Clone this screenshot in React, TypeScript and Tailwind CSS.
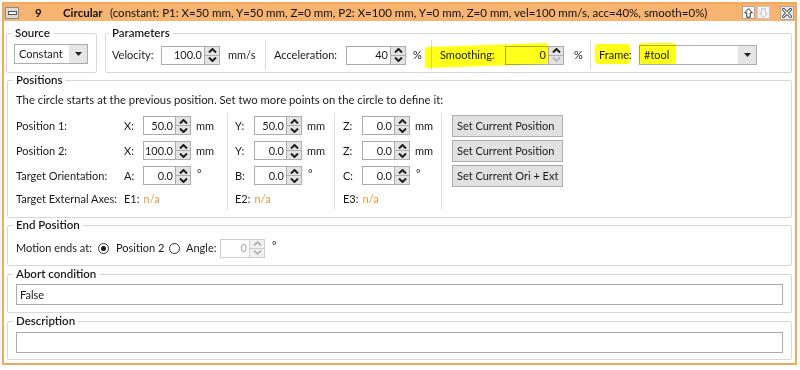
import React from "react";

function Chev({ up, dim }: { up: boolean; dim?: boolean }) {
  return (
    <svg width="9" height="5" viewBox="0 0 9 5" className="block">
      <path
        d={up ? "M1 4.5 L4.5 1 L8 4.5" : "M1 0.5 L4.5 4 L8 0.5"}
        fill="none"
        stroke={dim ? "#b8b8b8" : "#1e1e1e"}
        strokeWidth="2"
      />
    </svg>
  );
}

function Num({
  value,
  w,
  dimUp,
  dimDown,
  dis,
}: {
  value: string;
  w: string;
  dimUp?: boolean;
  dimDown?: boolean;
  dis?: boolean;
}) {
  return (
    <div className="flex h-[19px]">
      <div
        className={`${w} h-full border bg-white flex items-center justify-end pr-[2px] ${
          dis ? "border-[#cccccc] text-[#a6a6a6]" : "border-[#ababab] text-[#1a1a1a]"
        }`}
      >
        {value}
      </div>
      <div
        className={`w-[15px] h-full flex flex-col border border-l-0 ${
          dis ? "border-[#cccccc] bg-[#f0f0f0]" : "border-[#adadad] bg-[#e3e3e3]"
        }`}
      >
        <div
          className={`flex-1 flex items-center justify-center border-b ${
            dis ? "border-[#cccccc]" : "border-[#adadad]"
          }`}
        >
          <Chev up dim={dimUp || dis} />
        </div>
        <div className="flex-1 flex items-center justify-center">
          <Chev up={false} dim={dimDown || dis} />
        </div>
      </div>
    </div>
  );
}

function Combo({ value, w }: { value: string; w: string }) {
  return (
    <div className={`${w} h-[20px] flex border border-[#acacac] bg-white`}>
      <div className="flex-1 flex items-center pl-[4px] text-[#1a1a1a]">{value}</div>
      <div className="w-[18px] bg-[#e5e5e5] flex items-center justify-center">
        <svg width="7" height="4" viewBox="0 0 7 4">
          <path d="M0 0H7L3.5 4Z" fill="#222" />
        </svg>
      </div>
    </div>
  );
}

function Group({
  title,
  className,
  children,
}: {
  title: string;
  className?: string;
  children: React.ReactNode;
}) {
  return (
    <fieldset className={`border border-[#d7d7d7] rounded-[2px] pr-[8px] min-w-0 ${className ?? "pl-[8px]"}`}>
      <legend className="-ml-[3px] px-[3px] leading-[14px] text-[11.5px] font-semibold text-[#1a1a1a]">{title}</legend>
      {children}
    </fieldset>
  );
}

function Radio({ checked }: { checked?: boolean }) {
  return (
    <div className="w-[11px] h-[11px] rounded-full border border-[#333] bg-white flex items-center justify-center">
      {checked && <div className="w-[5px] h-[5px] rounded-full bg-[#1a1a1a]" />}
    </div>
  );
}

function Btn({ children }: { children: React.ReactNode }) {
  return (
    <div className="w-[111px] h-[22px] border border-[#adadad] bg-[#e1e1e1] flex items-center pl-[4px] text-[#1a1a1a]">
      {children}
    </div>
  );
}

function Cell({ children, last }: { children: React.ReactNode; last?: boolean }) {
  return <div className={`${last ? "h-[22px]" : "h-[25px]"} flex items-center`}>{children}</div>;
}

function AxisCell({ label, value, unit }: { label: string; value: string; unit: string }) {
  return (
    <Cell>
      <span className="w-[19px]">{label}</span>
      <Num value={value} w="w-[33px]" />
      <span className={unit === "mm" ? "ml-[5px]" : "ml-[6px] -mt-[4px]"}>{unit}</span>
    </Cell>
  );
}

function NA({ label }: { label: string }) {
  return (
    <Cell last>
      <span>{label}:</span>
      <span className="ml-[4px] text-[#f0963a]">n/a</span>
    </Cell>
  );
}

export default function App() {
  return (
    <div className="w-[800px] h-[370px] bg-white pt-[2px] pl-[2px] font-['Lato',sans-serif] text-[11px] leading-[14px] text-[#1a1a1a] whitespace-nowrap">
      <div className="w-[795px] h-[363px] border-2 border-[#f5a85c] flex flex-col">
        {/* header */}
        <div className="h-[17px] bg-[#f7b470] flex items-center text-[#111] text-[11.5px]">
          <div className="ml-[1px] w-[14px] h-[12px] border border-[#8c8c8c] bg-[#dadada] flex items-center justify-center">
            <div className="w-[9px] h-[4px] border border-[#555] bg-white" />
          </div>
          <span className="ml-[16px] w-[28px] font-bold">9</span>
          <span className="w-[47px] font-bold">Circular</span>
          <span className="text-[11.5px]">
            (constant: P1: X=50 mm, Y=50 mm, Z=0 mm, P2: X=100 mm, Y=0 mm, Z=0 mm, vel=100 mm/s, acc=40%, smooth=0%)
          </span>
          <div className="ml-auto flex items-center mr-[1px]">
            <div className="w-[13px] h-[13px] border border-[#a8a8a8] bg-[#f4f4f4] flex items-center justify-center">
              <svg width="9" height="10" viewBox="0 0 9 10">
                <path d="M4.5 0.7 L8.3 4.8 L6.2 4.8 L6.2 9.3 L2.8 9.3 L2.8 4.8 L0.7 4.8 Z" fill="white" stroke="#333" strokeWidth="1" />
              </svg>
            </div>
            <div className="ml-[2px] w-[13px] h-[13px] border border-[#c8c8c8] bg-[#f4f4f4] flex items-center justify-center">
              <svg width="9" height="10" viewBox="0 0 9 10">
                <path d="M4.5 9.3 L8.3 5.2 L6.2 5.2 L6.2 0.7 L2.8 0.7 L2.8 5.2 L0.7 5.2 Z" fill="white" stroke="#bdbdbd" strokeWidth="1" />
              </svg>
            </div>
            <div className="ml-[10px] w-[14px] h-[14px] border border-[#a8a8a8] bg-[#e8e8e8] flex items-center justify-center">
              <svg width="10" height="10" viewBox="0 0 10 10">
                <path d="M1.5 1.5 L8.5 8.5 M8.5 1.5 L1.5 8.5" stroke="#444" strokeWidth="3" strokeLinecap="square" />
                <path d="M1.5 1.5 L8.5 8.5 M8.5 1.5 L1.5 8.5" stroke="#fff" strokeWidth="1.1" strokeLinecap="square" />
              </svg>
            </div>
          </div>
        </div>

        {/* body */}
        <div className="flex-1 px-[3px] pt-[5px] flex flex-col">
          <div className="flex gap-[8px]">
            <Group title="Source" className="pl-[8px] w-[91px] -ml-[1px] pb-[8px]">
              <div className="pt-[4px] -ml-[1px]">
                <Combo value="Constant" w="w-[74px]" />
              </div>
            </Group>
            <Group title="Parameters" className="pl-[6px] flex-1 pb-[2px]">
              <div className="relative h-[30px] flex items-stretch">
                <div className="flex items-center pr-[7px] border-r border-[#dcdcdc]">
                  <span className="w-[49px]">Velocity:</span>
                  <Num value="100.0" w="w-[44px]" />
                  <span className="ml-[8px] w-[30px]">mm/s</span>
                </div>
                <div className="flex items-center pl-[8px] pr-[9px] border-r border-[#dcdcdc]">
                  <span className="w-[72px]">Acceleration:</span>
                  <Num value="40" w="w-[45px]" />
                  <span className="ml-[7px] w-[9px]">%</span>
                </div>
                <div className="flex items-center pl-[8px] pr-[8px] border-r border-[#dcdcdc]">
                  <span className="w-[65px]">Smoothing:</span>
                  <Num value="0" w="w-[44px]" dimDown />
                  <span className="ml-[10px] w-[8px]">%</span>
                </div>
                <div className="flex items-center pl-[8px]">
                  <span className="w-[40px]">Frame:</span>
                  <Combo value="#tool" w="w-[118px]" />
                </div>
                {/* highlighter strokes */}
                <div className="absolute left-[313px] top-[5px] w-[123px] h-[21px] bg-[#ffff1a] mix-blend-multiply -skew-y-2 rounded-[3px] pointer-events-none" />
                <div className="absolute left-[483px] top-[4px] w-[35px] h-[20px] bg-[#ffff1a] mix-blend-multiply rounded-[3px] pointer-events-none" />
                <div className="absolute left-[527px] top-[3px] w-[37px] h-[21px] bg-[#ffff1a] mix-blend-multiply rounded-[3px] pointer-events-none" />
              </div>
            </Group>
          </div>

          <Group title="Positions" className="pl-[8px] pb-[7px]">
            <div className="pt-[5px] h-[21px] flex items-center text-[11.3px]">
              The circle starts at the previous position. Set two more points on the circle to define it:
            </div>
            <div className="mt-[5px] flex">
              <div className="w-[108px] flex flex-col">
                <Cell>Position 1:</Cell>
                <Cell>Position 2:</Cell>
                <Cell>Target Orientation:</Cell>
                <Cell last>Target External Axes:</Cell>
              </div>
              <div className="w-[104px] flex flex-col border-r border-[#dcdcdc]">
                <AxisCell label="X:" value="50.0" unit="mm" />
                <AxisCell label="X:" value="100.0" unit="mm" />
                <AxisCell label="A:" value="0.0" unit="°" />
                <NA label="E1" />
              </div>
              <div className="w-[107px] pl-[7px] flex flex-col border-r border-[#dcdcdc]">
                <AxisCell label="Y:" value="50.0" unit="mm" />
                <AxisCell label="Y:" value="0.0" unit="mm" />
                <AxisCell label="B:" value="0.0" unit="°" />
                <NA label="E2" />
              </div>
              <div className="w-[107px] pl-[8px] flex flex-col border-r border-[#dcdcdc]">
                <AxisCell label="Z:" value="0.0" unit="mm" />
                <AxisCell label="Z:" value="0.0" unit="mm" />
                <AxisCell label="C:" value="0.0" unit="°" />
                <NA label="E3" />
              </div>
              <div className="pl-[10px] flex flex-col">
                <Cell>
                  <Btn>Set Current Position</Btn>
                </Cell>
                <Cell>
                  <Btn>Set Current Position</Btn>
                </Cell>
                <Cell>
                  <Btn>Set Current Ori + Ext</Btn>
                </Cell>
              </div>
            </div>
          </Group>

          <Group title="End Position" className="pl-[8px] pb-[7px]">
            <div className="pt-[6px] h-[26px] flex items-center">
              <span className="w-[82px]">Motion ends at:</span>
              <Radio checked />
              <span className="ml-[7px] w-[48px]">Position 2</span>
              <div className="ml-[5px]">
                <Radio />
              </div>
              <span className="ml-[6px] w-[34px]">Angle:</span>
              <Num value="0" w="w-[30px]" dis />
              <span className="ml-[7px] -mt-[4px]">°</span>
            </div>
          </Group>

          <Group title="Abort condition" className="pl-[8px] mt-[1px] pb-[7px]">
            <div className="mt-[3px] h-[21px] border border-[#ababab] bg-white flex items-center pl-[3px]">False</div>
          </Group>

          <Group title="Description" className="pl-[8px] mt-[1px] pb-[6px]">
            <div className="mt-[4px] h-[21px] border border-[#ababab] bg-white" />
          </Group>
        </div>
      </div>
    </div>
  );
}
